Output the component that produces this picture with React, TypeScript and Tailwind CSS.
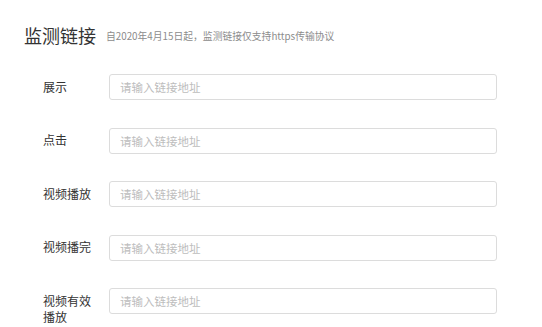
const FIELDS = ['展示', '点击', '视频播放', '视频播完', '视频有效播放']

export default function App() {
  return (
    <div
      className="min-h-[327px] w-[542px] bg-white text-[#333]"
      style={{ fontFamily: '"Noto Sans CJK SC", "Noto Sans", sans-serif' }}
    >
      {/* 标题 */}
      <div className="flex items-center pl-[24px] pt-[24px]">
        <h1 className="text-[18px] leading-[22px] font-normal text-[#333]">监测链接</h1>
        <span className="ml-[10px] mt-[1px] text-[9.8px] leading-[14px] text-[#8c8c8c]">
          自2020年4月15日起，监测链接仅支持https传输协议
        </span>
      </div>

      {/* 表单 */}
      <div className="mt-[28px] flex flex-col gap-[27.5px] pl-[43px]">
        {FIELDS.map((label) => (
          <div key={label} className="flex items-start">
            <label className="mr-[14px] w-[52px] pt-[4.5px] text-[12px] leading-[16px] text-[#333]">
              {label}
            </label>
            <input
              className="h-[26px] w-[388px] rounded-[3px] border border-[#dcdcdc] px-[10px] text-[11.5px] text-[#333] outline-none placeholder:text-[#bdbdbd]"
              placeholder="请输入链接地址"
            />
          </div>
        ))}
      </div>
    </div>
  )
}
